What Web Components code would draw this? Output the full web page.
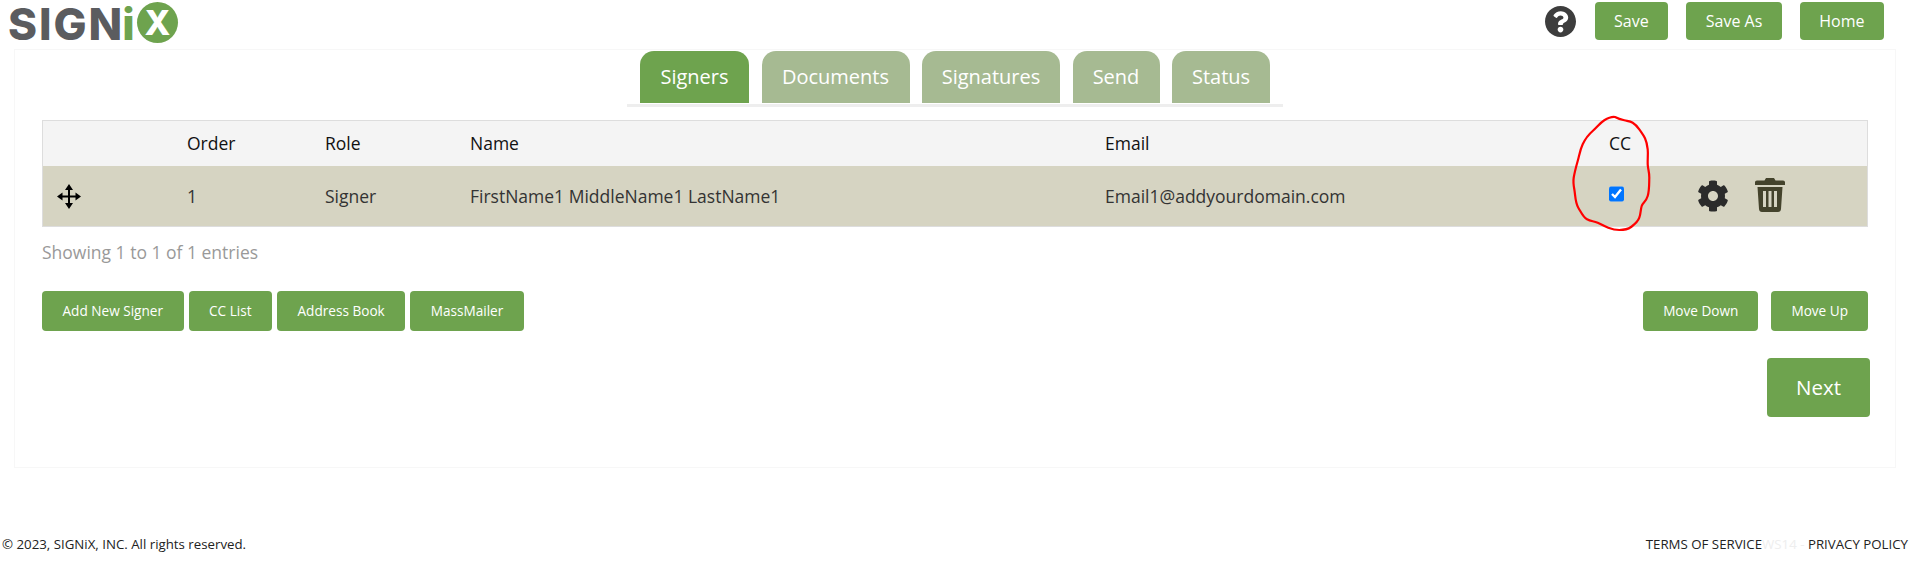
<!DOCTYPE html>
<html lang="en"><head><meta charset="utf-8"><title>SIGNiX</title>
<style>
html,body{margin:0;padding:0;background:#fff;font-family:"Open Sans","Liberation Sans",sans-serif;color:#222}
</style></head><body>
<sx-app></sx-app>
<script>
function def(name, html, setup){
  customElements.define(name, class extends HTMLElement{
    constructor(){super();const r=this.attachShadow({mode:'open'});r.innerHTML=html;}
    connectedCallback(){ if(setup) setup(this); }
  });
}
def('sx-btn',`<style>
:host{display:inline-flex;align-items:center;justify-content:center;background:#6ea34e;color:#fff;border-radius:4px;box-sizing:border-box;height:var(--h,40px);padding:0 var(--p,20.5px) var(--pb,2px);font-size:var(--f,13.6px);white-space:nowrap;font-family:"Open Sans",sans-serif}
</style><slot></slot>`);
def('sx-logo',`<style>
:host{display:flex;align-items:center;height:41px;font-family:Inter,"Open Sans",sans-serif;font-weight:800}
.s{font-size:44px;line-height:41px;color:#5b5c5f;width:111px;margin-top:4px;white-space:nowrap;letter-spacing:1.9px}
.i{font-size:44px;line-height:41px;color:#6ea34e;width:9px;margin:4px 4px 0 5px;display:flex;justify-content:center}
.x{width:41px;height:41px;border-radius:50%;background:#6ea34e;color:#fff;font-size:34px;display:flex;align-items:center;justify-content:center;line-height:1}
</style><span class="s">SIGN</span><span class="i">i</span><span class="x">X</span>`);
def('sx-header',`<style>
:host{display:flex;justify-content:space-between;align-items:flex-start;height:49px;box-sizing:border-box;padding:2px 27px 0 8px}
.r{display:flex;align-items:center}
sx-btn{--h:38px;--f:16px;--p:19.5px;--pb:0px;margin-left:18px}
svg{width:31px;height:31px;display:block;margin-right:1px}
</style><sx-logo></sx-logo><div class="r">
<svg viewBox="8 8 496 496"><path fill="#3d3d3d" d="M504 256c0 136.997-111.043 248-248 248S8 392.997 8 256C8 119.083 119.043 8 256 8s248 111.083 248 248zM262.655 90c-54.497 0-89.255 22.957-116.549 63.758-3.536 5.286-2.353 12.415 2.715 16.258l34.699 26.31c5.205 3.947 12.621 3.008 16.665-2.122 17.864-22.658 30.113-35.797 57.303-35.797 20.429 0 45.698 13.148 45.698 32.958 0 14.976-12.363 22.667-32.534 33.976C247.128 238.528 216 254.941 216 296v4c0 6.627 5.373 12 12 12h56c6.627 0 12-5.373 12-12v-1.333c0-28.462 83.186-29.647 83.186-106.667 0-58.002-60.165-102-116.531-102zM256 338c-25.365 0-46 20.635-46 46 0 25.364 20.635 46 46 46s46-20.636 46-46c0-25.365-20.635-46-46-46z"/></svg>
<sx-btn>Save</sx-btn><sx-btn>Save As</sx-btn><sx-btn>Home</sx-btn></div>`);
def('sx-tab',`<style>
:host{display:block;height:52px;line-height:52px;text-align:center;background:#a6ba92;color:#fff;font-size:20px;border-radius:14px 14px 0 0;white-space:nowrap}
:host([active]){background:#6ea34e}
</style><slot></slot>`);
def('sx-tabs',`<style>
:host{display:flex;justify-content:center;margin-top:1px}
.t{display:grid;grid-template-columns:109px 148px 138px 87px 98px;gap:12.5px;padding:0 13px 4px;background:linear-gradient(#eee,#eee) bottom/100% 3px no-repeat}
</style><div class="t"><slot></slot></div>`);
def('sx-table',`<style>
:host{display:block;position:relative;border:1px solid #ddd;margin-top:13px;font-size:17.5px;color:#333}
.row{display:grid;grid-template-columns:144px 138px 145px 635px 504px 88px 1fr;align-items:center}
.h{height:45px;padding-bottom:2px;box-sizing:border-box;background:#f4f4f4;color:#111;font-weight:500}
.b{height:60px;background:#d6d4c2}
.m{display:block;width:24px;height:25px;margin-left:13.5px;margin-top:1px}
input{width:15px;height:16px;margin:0 0 5px;display:block;accent-color:#0075ff}
.a{display:flex;align-items:center;gap:26px}
.g{width:32px;height:32px;display:block}
.tr{width:30px;height:34px;display:block;margin-top:-2px}
.ring{position:absolute;left:1523px;top:-7px;width:95px;height:125px;overflow:visible}
</style>
<div class="row h"><span></span><span>Order</span><span>Role</span><span>Name</span><span>Email</span><span>CC</span><span></span></div>
<div class="row b">
<svg class="m" viewBox="0 0 24 25"><path fill="#000" d="M12 0l4 6h-3v5.500h5.500v-3L24 12.500l-5.500 4v-3H13V19h3l-4 6-4-6h3v-5.500H5.500v3L0 12.500l5.500-4v3H11V6H8z"/></svg>
<span>1</span><span>Signer</span><span>FirstName1 MiddleName1 LastName1</span><span>Email1@addyourdomain.com</span>
<span><input type="checkbox" checked aria-label="CC"></span>
<span class="a">
<svg class="g" viewBox="0 0 512 512"><path fill="#2b2b2b" d="M487.4 315.7l-42.6-24.6c4.3-23.2 4.3-47 0-70.2l42.6-24.6c4.9-2.8 7.1-8.6 5.5-14-11.1-35.6-30-67.8-54.7-94.6-3.8-4.1-10-5.1-14.8-2.3L380.8 110c-17.9-15.4-38.5-27.3-60.8-35.1V25.8c0-5.6-3.9-10.5-9.4-11.7-36.7-8.2-74.3-7.8-109.2 0-5.5 1.2-9.4 6.1-9.4 11.7V75c-22.2 7.9-42.8 19.8-60.8 35.1L88.7 85.5c-4.9-2.8-11-1.9-14.8 2.3-24.7 26.7-43.6 58.9-54.7 94.6-1.7 5.4.6 11.2 5.5 14L67.3 221c-4.3 23.2-4.3 47 0 70.2l-42.6 24.6c-4.9 2.8-7.1 8.6-5.5 14 11.1 35.6 30 67.8 54.7 94.6 3.8 4.1 10 5.1 14.8 2.3l42.6-24.6c17.9 15.4 38.5 27.3 60.8 35.1v49.2c0 5.6 3.9 10.5 9.4 11.7 36.7 8.2 74.3 7.8 109.2 0 5.5-1.2 9.4-6.1 9.4-11.7v-49.2c22.2-7.9 42.8-19.8 60.8-35.1l42.6 24.6c4.9 2.8 11 1.9 14.8-2.3 24.7-26.7 43.6-58.9 54.7-94.6 1.5-5.5-.7-11.3-5.6-14.1zM256 336c-44.1 0-80-35.9-80-80s35.9-80 80-80 80 35.9 80 80-35.9 80-80 80z"/></svg>
<svg class="tr" viewBox="0 0 30 34"><path fill="#44432c" fill-rule="evenodd" d="M11 0h8l1.500 2.500H28c1.200 0 2 .8 2 2V7H0V4.500c0-1.200.8-2 2-2h7.500zM2.500 9h25L26 31c-.1 1.700-1.300 3-3 3H7c-1.700 0-2.900-1.300-3-3zM8 13v16h3V13zM13.500 13v16h3V13zM19 13v16h3V13z"/></svg>
</span></div>
<svg class="ring" viewBox="0 0 95 125"><path fill="none" stroke="#f00" stroke-width="2.2" stroke-linejoin="round" stroke-linecap="round" d="M49 3C52 4.500 55 5.500 58.300 6.300S64 7 66.700 8.700 71 12 73.300 15.300 77.500 21 79 24.300 81.200 31 81.700 35.300 81.500 45 81.700 50.300 83.500 58 83.300 63.700 83.500 76 81.700 82 77 88 75.700 92 75 99 73.300 103.700 69 110 65 113 58 116 53.300 116 47 115.500 42.300 113.700 36 110.500 31.700 108.700 25 107.500 21 105.300 15.500 99 12.300 93.700 9.500 82 8.300 75.300 7 68 7.700 63.700 10 53 11.700 47 14 36 16.700 30.300 22 21 26.700 17 34 9 38.300 6.300 45 2.500 49 3z"/></svg>`);
def('sx-footer',`<style>
:host{display:flex;justify-content:space-between;margin-top:67px;font-size:13.28px;line-height:18px;padding:0 3px 0 2px;color:#222}
.w{color:#eee}
</style><span>© 2023, SIGNiX, INC. All rights reserved.</span><span>TERMS OF SERVICE<span class="w">WS14 - </span>PRIVACY POLICY</span>`);
def('sx-app',`<style>
:host{display:block}
.panel{margin:0 15px 0 14px;border:1px solid #f7f7f7;height:417px;padding:0 27px}
.info{font-size:17.5px;line-height:24px;color:#999;margin-top:13px}
.acts{display:flex;justify-content:space-between;margin-top:27px}
.l{display:flex;gap:5px}
.rr{display:flex;gap:13px;--p:20px}
.next{display:flex;justify-content:flex-end;margin:27px -2px 0 0}
sx-btn.n{--h:59px;--f:20.5px;--p:29px}
</style>
<sx-header></sx-header>
<div class="panel">
<sx-tabs><sx-tab active>Signers</sx-tab><sx-tab>Documents</sx-tab><sx-tab>Signatures</sx-tab><sx-tab>Send</sx-tab><sx-tab>Status</sx-tab></sx-tabs>
<sx-table></sx-table>
<div class="info">Showing 1 to 1 of 1 entries</div>
<div class="acts"><div class="l"><sx-btn>Add New Signer</sx-btn><sx-btn>CC List</sx-btn><sx-btn>Address Book</sx-btn><sx-btn>MassMailer</sx-btn></div>
<div class="rr"><sx-btn>Move Down</sx-btn><sx-btn>Move Up</sx-btn></div></div>
<div class="next"><sx-btn class="n">Next</sx-btn></div>
</div>
<sx-footer></sx-footer>`);
</script>
</body></html>
